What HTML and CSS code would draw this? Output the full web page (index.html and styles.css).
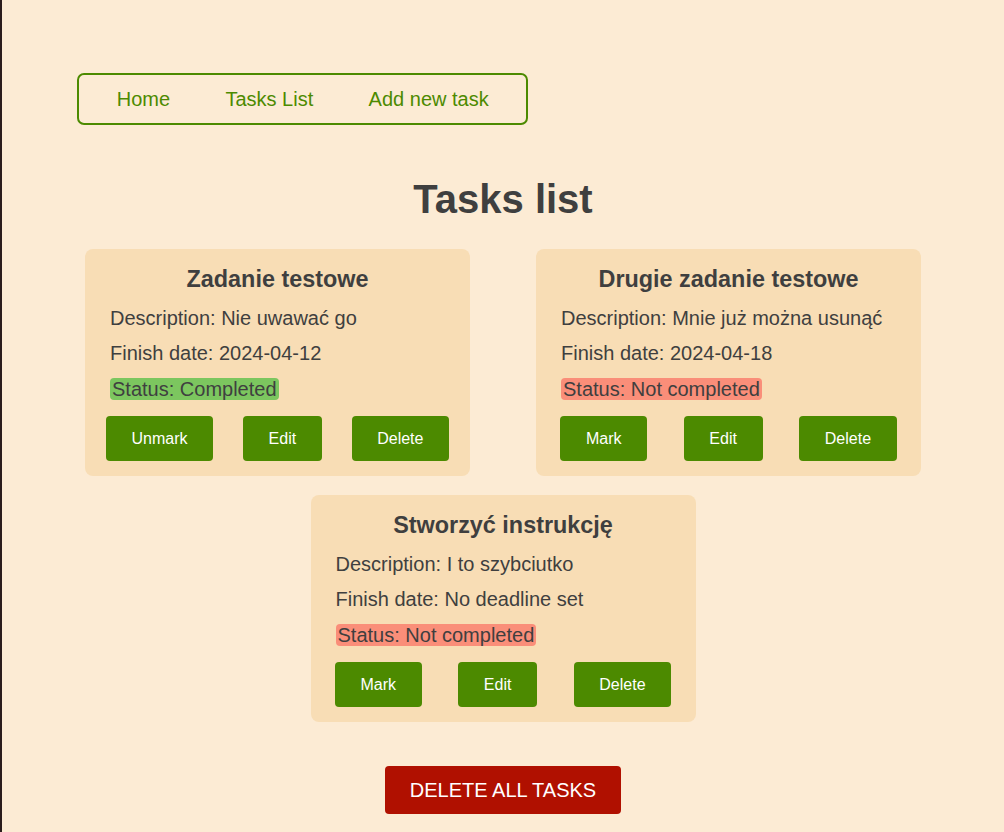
FILE: index.html
```html
<!DOCTYPE html>
<html lang="pl">
<head>
<meta charset="utf-8">
<title>Tasks list</title>
<link rel="stylesheet" href="styles.css">
</head>
<body>
<div class="page">
  <nav class="nav">
    <a class="nav-link" href="#">Home</a>
    <a class="nav-link" href="#">Tasks List</a>
    <a class="nav-link" href="#">Add new task</a>
  </nav>

  <h1 class="title">Tasks list</h1>

  <div class="cards">
    <div class="card">
      <h3 class="card-title">Zadanie testowe</h3>
      <p class="line">Description: Nie uwawać go</p>
      <p class="line">Finish date: 2024-04-12</p>
      <p class="line status-line"><span class="status done">Status: Completed</span></p>
      <div class="actions">
        <button class="btn">Unmark</button>
        <button class="btn">Edit</button>
        <button class="btn">Delete</button>
      </div>
    </div>

    <div class="card">
      <h3 class="card-title">Drugie zadanie testowe</h3>
      <p class="line">Description: Mnie już można usunąć</p>
      <p class="line">Finish date: 2024-04-18</p>
      <p class="line status-line"><span class="status todo">Status: Not completed</span></p>
      <div class="actions">
        <button class="btn">Mark</button>
        <button class="btn">Edit</button>
        <button class="btn">Delete</button>
      </div>
    </div>

    <div class="card">
      <h3 class="card-title">Stworzyć instrukcję</h3>
      <p class="line">Description: I to szybciutko</p>
      <p class="line">Finish date: No deadline set</p>
      <p class="line status-line"><span class="status todo">Status: Not completed</span></p>
      <div class="actions">
        <button class="btn">Mark</button>
        <button class="btn">Edit</button>
        <button class="btn">Delete</button>
      </div>
    </div>
  </div>

  <div class="bottom">
    <button class="btn-danger">DELETE ALL TASKS</button>
  </div>
</div>
</body>
</html>
```

FILE: styles.css
```css
html, body {
  margin: 0;
  padding: 0;
}

body {
  background: #fcebd4;
  border-left: 2px solid #2a1c1c;
  min-height: 832px;
  box-sizing: border-box;
  font-family: "Liberation Sans", Arial, sans-serif;
  font-size: 20px;
  color: #3f3f3f;
}

.page {
  padding-top: 73px;
  padding-bottom: 40px;
}

.nav {
  display: inline-flex;
  margin-left: 75px;
  height: 48px;
  padding: 0 10px;
  border: 2px solid #4c8a00;
  border-radius: 7px;
  align-items: center;
}

.nav-link {
  color: #4c8a00;
  text-decoration: none;
  padding: 0 27.7px;
  line-height: 48px;
}

.title {
  margin: 51px 0 27px;
  text-align: center;
  font-size: 40px;
  line-height: 46px;
  font-weight: bold;
  color: #3f3f3f;
}

.cards {
  display: flex;
  flex-wrap: wrap;
  justify-content: center;
  column-gap: 66px;
  row-gap: 19px;
}

.card {
  width: 385px;
  box-sizing: border-box;
  background: #f8ddb5;
  border-radius: 8px;
  padding: 17px 25px 15px;
}

.card-title {
  margin: 0 0 14px;
  text-align: center;
  font-size: 23.4px;
  line-height: 27px;
  font-weight: bold;
}

.line {
  margin: 0 0 12px;
  line-height: 23px;
}

.line + .line {
  margin-top: 0;
}

.line:nth-of-type(2) {
  margin-bottom: 13px;
}

.status-line {
  margin-bottom: 15px;
}

.status {
  padding: 0 2px;
  border-radius: 4px;
}

.status.done {
  background: #7cc65f;
}

.status.todo {
  background: #fa8e79;
}

.actions {
  display: flex;
  justify-content: space-around;
  margin: 0 -19px;
}

.btn {
  font-family: "Liberation Sans", Arial, sans-serif;
  font-size: 16px;
  line-height: 19px;
  padding: 13px 25.6px;
  border: none;
  border-radius: 4px;
  background: #4c8a00;
  color: #ffffff;
}

.bottom {
  display: flex;
  justify-content: center;
  margin-top: 44px;
}

.btn-danger {
  font-family: "Liberation Sans", Arial, sans-serif;
  font-size: 20px;
  line-height: 24px;
  padding: 12px 25px;
  border: none;
  border-radius: 4px;
  background: #b01000;
  color: #ffffff;
}
```
